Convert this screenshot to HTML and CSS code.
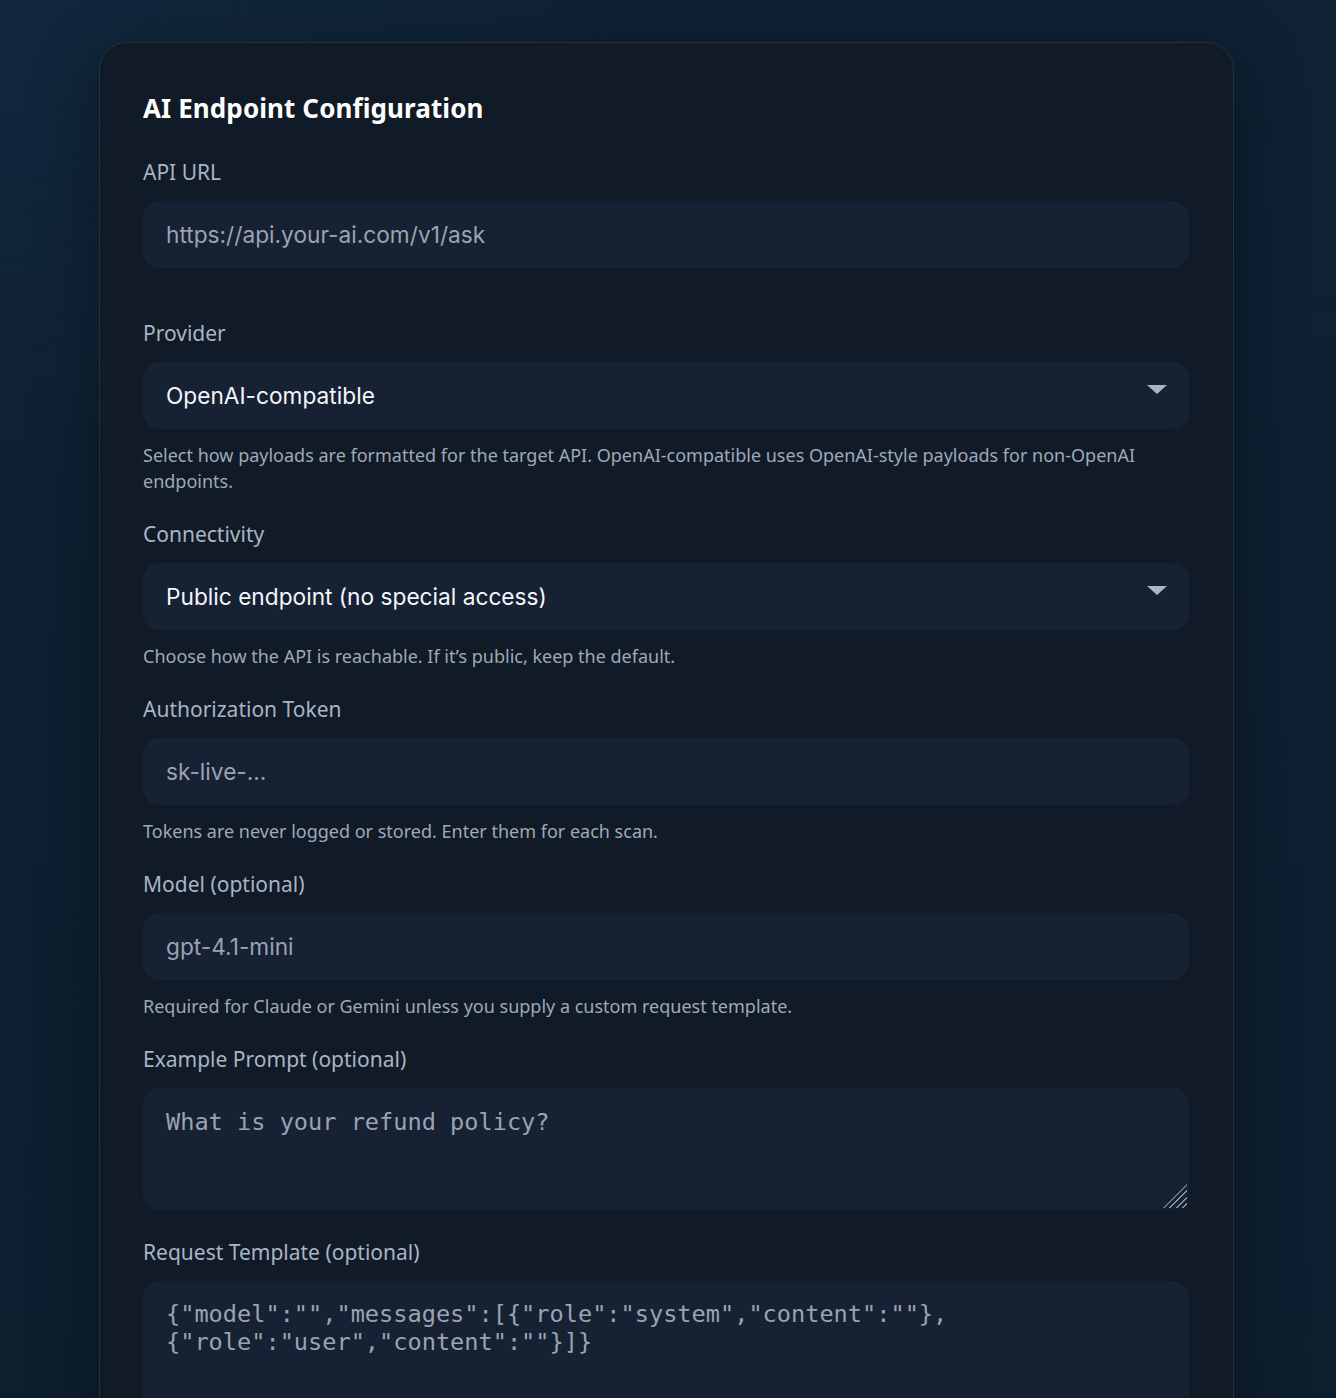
FILE: index.html
```html
<!DOCTYPE html>
<html lang="en">
<head>
<meta charset="utf-8">
<title>AI Endpoint Configuration</title>
<link rel="stylesheet" href="styles.css">
</head>
<body>
<main class="page">
  <section class="card">
    <h2 class="card-title">AI Endpoint Configuration</h2>
    <div class="fields">
      <div class="field field-spaced">
        <label class="label" for="url">API URL</label>
        <input class="control" id="url" type="text" placeholder="https://api.your-ai.com/v1/ask">
      </div>
      <div class="field">
        <label class="label" for="provider">Provider</label>
        <div class="select-wrap">
          <select class="control select" id="provider">
            <option>OpenAI-compatible</option>
          </select>
        </div>
        <p class="hint">Select how payloads are formatted for the target API. OpenAI-compatible uses OpenAI-style payloads for non-OpenAI endpoints.</p>
      </div>
      <div class="field">
        <label class="label" for="conn">Connectivity</label>
        <div class="select-wrap">
          <select class="control select" id="conn">
            <option>Public endpoint (no special access)</option>
          </select>
        </div>
        <p class="hint">Choose how the API is reachable. If it’s public, keep the default.</p>
      </div>
      <div class="field">
        <label class="label" for="token">Authorization Token</label>
        <input class="control" id="token" type="text" placeholder="sk-live-...">
        <p class="hint">Tokens are never logged or stored. Enter them for each scan.</p>
      </div>
      <div class="field">
        <label class="label" for="model">Model (optional)</label>
        <input class="control" id="model" type="text" placeholder="gpt-4.1-mini">
        <p class="hint">Required for Claude or Gemini unless you supply a custom request template.</p>
      </div>
      <div class="field">
        <label class="label" for="prompt">Example Prompt (optional)</label>
        <div class="area-wrap area-wrap-handle">
          <textarea class="control area area-prompt" id="prompt" placeholder="What is your refund policy?"></textarea>
        </div>
      </div>
      <div class="field">
        <label class="label" for="tpl">Request Template (optional)</label>
        <div class="area-wrap">
          <textarea class="control area area-tpl" id="tpl" placeholder='{"model":"","messages":[{"role":"system","content":""},{"role":"user","content":""}]}'></textarea>
        </div>
      </div>
    </div>
  </section>
</main>
</body>
</html>
```
FILE: styles.css
```css
* { box-sizing: border-box; }

html, body {
  margin: 0;
  padding: 0;
}

body {
  min-height: 100vh;
  background:
    radial-gradient(ellipse 900px 700px at 0% 0%, #12283d 0%, rgba(18,40,61,0) 70%),
    linear-gradient(180deg, #0f2133 0%, #0d1e2f 100%);
  font-family: "Noto Sans", "Open Sans", sans-serif;
  color: #e6edf5;
}

.page {
  padding: 42px 102px 60px 99px;
}

.card {
  background: #111a27;
  border: 1px solid #25303f;
  border-radius: 28px;
  padding: 43px 44px 60px 43px;
  min-height: 1500px;
  box-shadow: 0 20px 60px rgba(5, 12, 22, 0.55);
}

.card-title {
  margin: 0 0 28px;
  font-size: 26px;
  line-height: 44px;
  font-weight: 700;
  color: #ffffff;
  letter-spacing: 0.1px;
}

.fields {
  display: flex;
  flex-direction: column;
  gap: 26px;
}

.field {
  display: flex;
  flex-direction: column;
}

.field-spaced {
  padding-bottom: 25px;
}

.label {
  font-size: 21px;
  line-height: 28px;
  color: #a9b4c4;
  margin-bottom: 15px;
}

.control {
  display: block;
  width: 100%;
  height: 67px;
  border: none;
  outline: none;
  border-radius: 16px;
  background: #172134;
  padding: 0 23px;
  font-family: Inter, "Liberation Sans", Arial, sans-serif;
  font-size: 22.7px;
  color: #f3f6fa;
  margin: 0;
}

.control::placeholder {
  color: #9aa3b0;
  opacity: 1;
}

.select-wrap {
  position: relative;
}

.select {
  appearance: none;
  -webkit-appearance: none;
  cursor: pointer;
}

.select-wrap::after {
  content: "";
  position: absolute;
  right: 22px;
  top: 23px;
  width: 0;
  height: 0;
  border-left: 10px solid transparent;
  border-right: 10px solid transparent;
  border-top: 9px solid #aab5c7;
  pointer-events: none;
}

.hint {
  margin: 13px 0 0;
  font-size: 18px;
  line-height: 26px;
  color: #9ea9b8;
}

.area-wrap {
  position: relative;
}

.area {
  resize: none;
  padding: 20px 23px;
  font-family: "DejaVu Sans Mono", "Liberation Mono", monospace;
  font-size: 23.6px;
  line-height: 28px;
}

.area-prompt {
  height: 122px;
  margin-bottom: 2px;
}

.area-tpl {
  height: 160px;
  padding-top: 19px;
  padding-right: 200px;
}

.area-wrap-handle::after {
  content: "";
  position: absolute;
  right: 2px;
  bottom: 4px;
  width: 24px;
  height: 24px;
  background: repeating-linear-gradient(135deg, transparent 0 3px, #8792a3 3px 4.5px);
  clip-path: polygon(100% 0, 100% 100%, 0 100%);
  pointer-events: none;
}
```
